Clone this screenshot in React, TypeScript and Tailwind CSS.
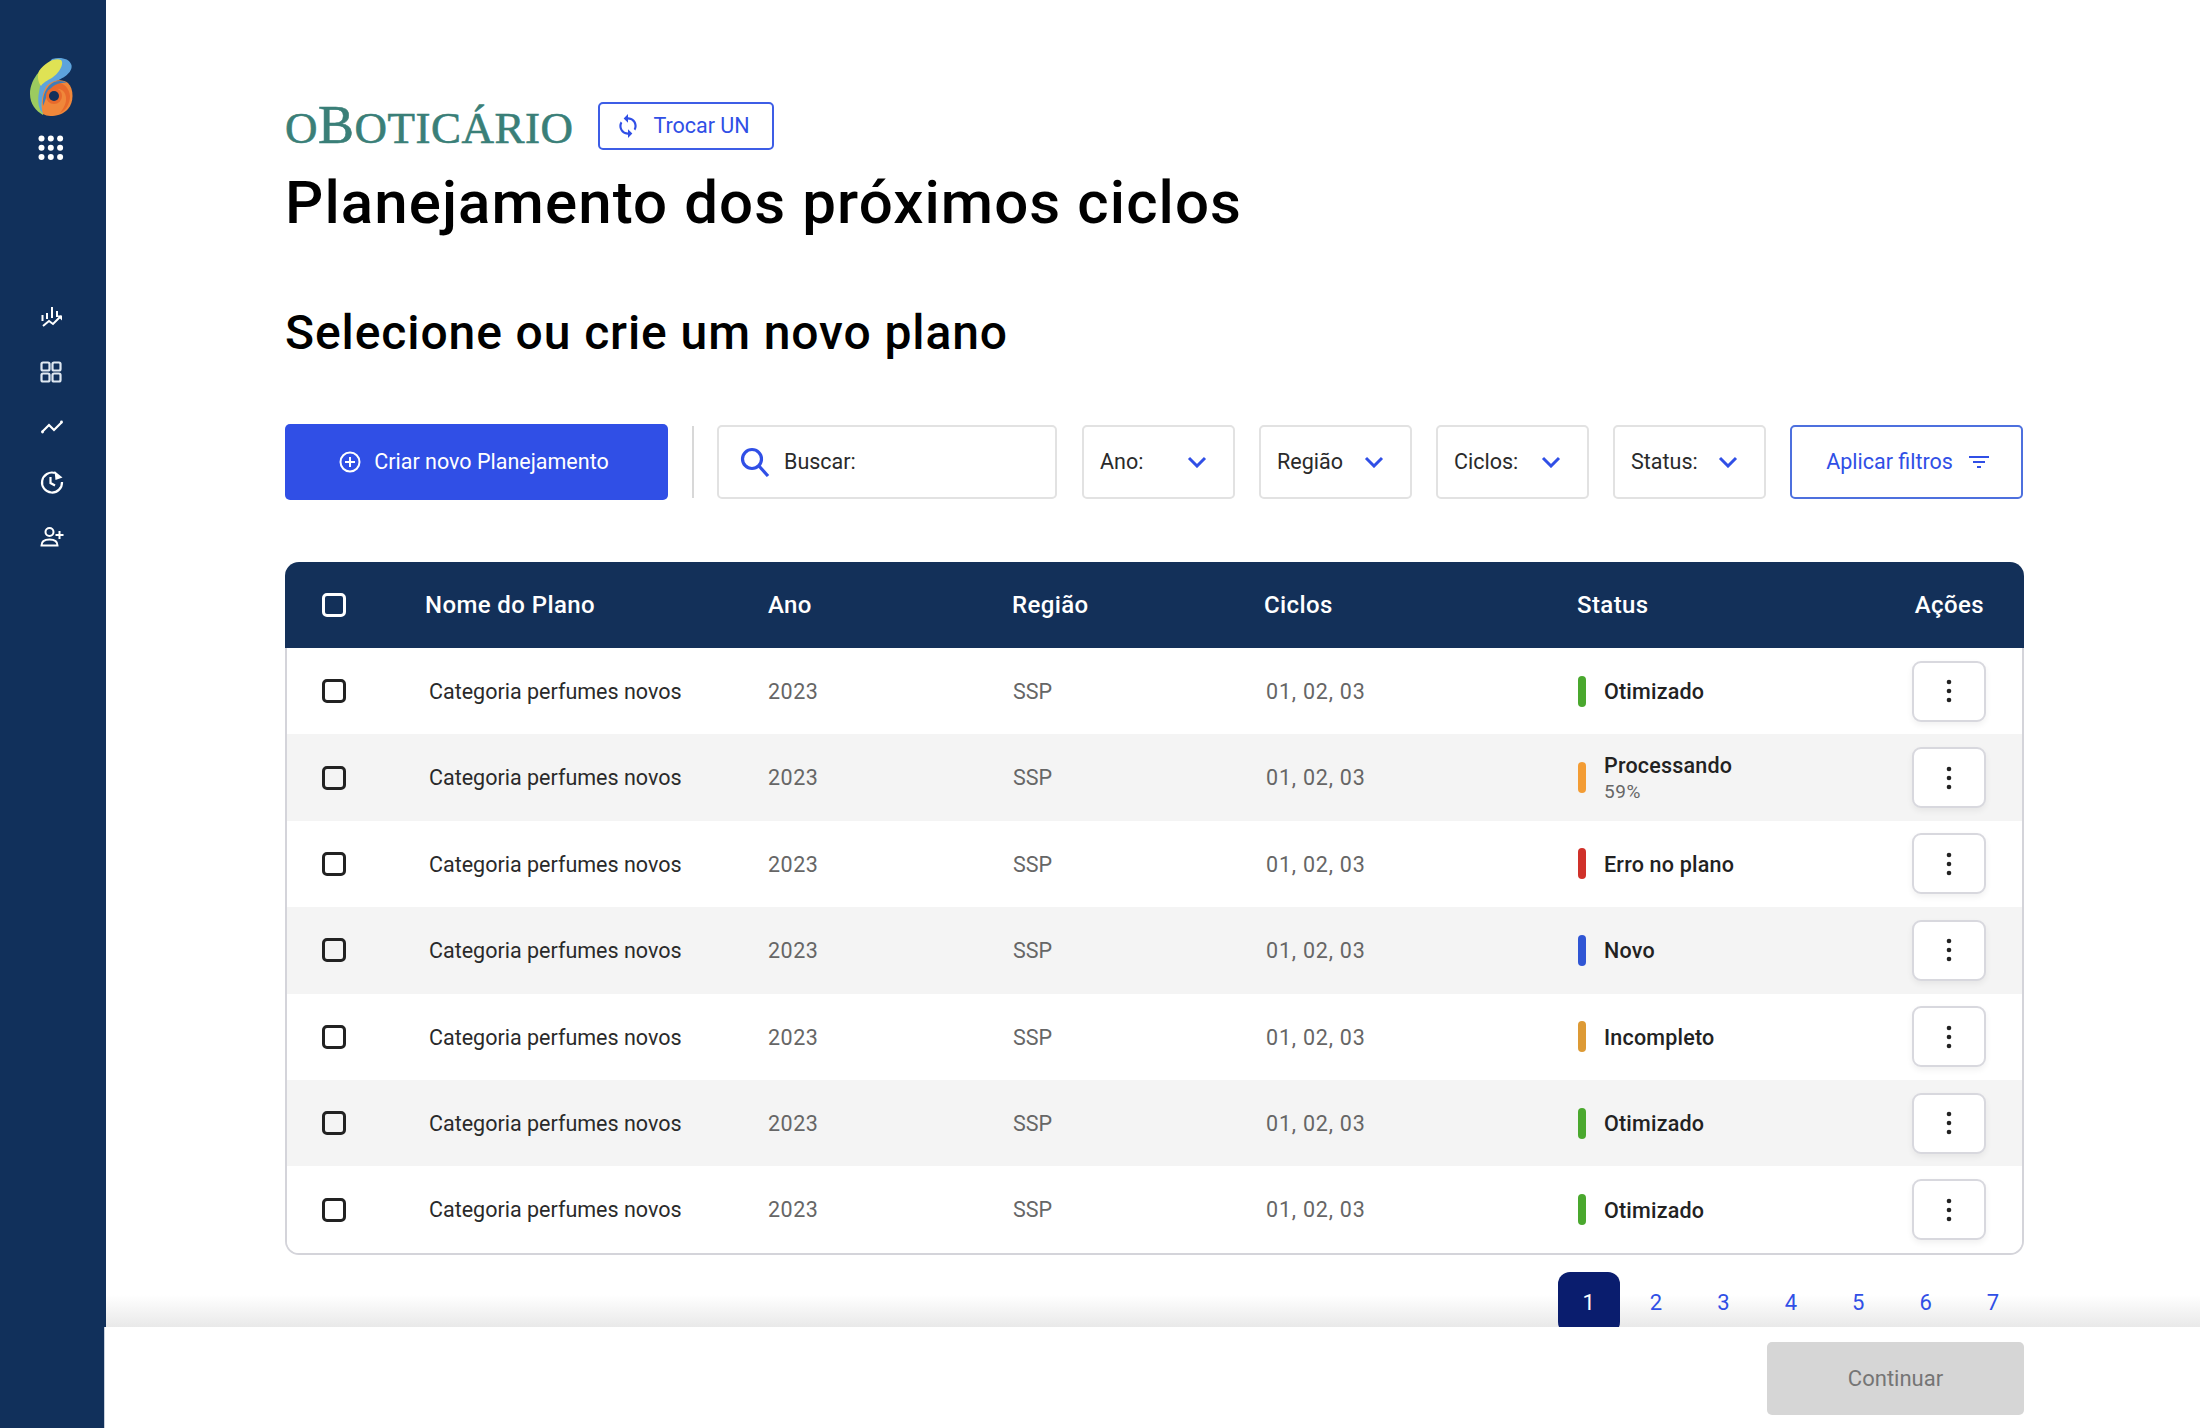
import { MdSync } from 'react-icons/md';

const rows = [
  { status: 'Otimizado', color: 'bg-[#4aa82e]' },
  { status: 'Processando', color: 'bg-[#f39c34]', note: '59%' },
  { status: 'Erro no plano', color: 'bg-[#d0312a]' },
  { status: 'Novo', color: 'bg-[#2f55d4]' },
  { status: 'Incompleto', color: 'bg-[#dd9a35]' },
  { status: 'Otimizado', color: 'bg-[#4aa82e]' },
  { status: 'Otimizado', color: 'bg-[#4aa82e]' },
];

const filters = ['Ano:', 'Região', 'Ciclos:', 'Status:'];
const pages = [1, 2, 3, 4, 5, 6, 7];
const gridCols = 'grid grid-cols-[140px_343px_244px_252px_313px_1fr] items-center';

function Logo() {
  return (
    <svg width="110" height="66" viewBox="0 0 110 66">
      <g transform="translate(0 -20)">
        <path d="M60 28C44 33 30 48 30 64C30 74 36 81 43 85L50 60L62 32Z" fill="#9ccb5f" />
        <path d="M52 29C60 27 69 28 71.5 35C73 43 62 49 54 52C47 55 44 62 42 70C41 76 42 82 44 84C39 81 37 72 39 62C41 50 45 36 52 29Z" fill="#5da3dc" />
        <path d="M39 41C45 32 56 27 61 30C65 34 58 45 50 49C46 51 42 54 41 56C38 52 37 46 39 41Z" fill="#dfe254" />
        <path d="M46 57C51 50 62 48 68 53C74 59 74 72 68 79C62 86 50 88 43 84C41 78 41 66 46 57Z" fill="#f0873a" />
        <path d="M54 53C62 51 69 57 70 66C70 74 66 80 60 83C66 76 68 68 64 62C60 57 52 58 48 63C48 59 50 55 54 53Z" fill="#e86a2c" />
        <path d="M43 76C42 66 46 56 54 52C59 50 64 51 67 53C60 52 52 55 48 62C46 67 45 72 43 76Z" fill="#3f7db8" />
        <circle cx="54" cy="66" r="8" fill="#e86a2c" />
        <circle cx="54" cy="66" r="5" fill="#11305b" />
      </g>
    </svg>
  );
}

function AppsIcon() {
  const dots = [0, 1, 2];
  return (
    <svg width="26" height="26" viewBox="0 0 26 26" fill="#fff">
      {dots.map((y) => dots.map((x) => <circle key={`${x}-${y}`} cx={3.5 + x * 9.3} cy={3.5 + y * 9.3} r="3" />))}
    </svg>
  );
}

function NavIcons() {
  return (
    <div className="flex flex-col items-center gap-[32px] text-white">
      <svg width="24" height="24" viewBox="0 0 24 24" fill="none" stroke="currentColor" strokeWidth="2">
        <path d="M12 2v11M17 6v6M7 8v6M2.500 10v6" />
        <path d="M3 21l6-5 4 3 8-8" />
        <path d="M17 10.500h5v5" fill="currentColor" stroke="none" />
      </svg>
      <svg className="-ml-[2px] -mt-px" width="24" height="24" viewBox="0 0 24 24" fill="none" stroke="#dfe8f2" strokeWidth="2.200">
        <rect x="2.500" y="2.500" width="8" height="8" rx="1.500" />
        <rect x="13.500" y="2.500" width="8" height="8" rx="1.500" />
        <rect x="2.500" y="13.500" width="8" height="8" rx="1.500" />
        <rect x="13.500" y="13.500" width="8" height="8" rx="1.500" />
      </svg>
      <svg width="24" height="22" viewBox="0 0 24 22" fill="none" stroke="currentColor" strokeWidth="2.200">
        <path d="M2 16l7-7 5 5 8-8" />
        <circle cx="2.500" cy="16" r="1.400" fill="currentColor" stroke="none" />
        <circle cx="21.500" cy="6" r="1.400" fill="currentColor" stroke="none" />
      </svg>
      <svg width="24" height="24" viewBox="0 0 24 24" fill="none" stroke="currentColor" strokeWidth="2.200">
        <path d="M15 3a10 10 0 1 0 7 9" />
        <path d="M10.500 7v6l4.500 2.500" />
        <path d="M14.500 1l8 6.500-7 2.500z" fill="currentColor" stroke="none" />
      </svg>
      <svg className="mt-px" width="24" height="20" viewBox="0 0 24 20" fill="none" stroke="currentColor" strokeWidth="2">
        <circle cx="9.500" cy="5" r="4" />
        <path d="M1.500 18.500c0-4 3.500-6 8-6s8 2 8 6z" />
        <path d="M19.500 4v8M15.500 8h8" />
      </svg>
    </div>
  );
}

function Checkbox({ light }: { light?: boolean }) {
  return (
    <div className={`ml-[37px] h-[24px] w-[24px] rounded-[5px] border-[3px] ${light ? 'border-white' : 'border-[#222222]'}`} />
  );
}

function Chevron() {
  return (
    <svg width="20" height="12" viewBox="0 0 20 12" fill="none" stroke="#304fe6" strokeWidth="3">
      <path d="M2 2l8 8 8-8" />
    </svg>
  );
}

function Kebab() {
  return (
    <svg width="6" height="26" viewBox="0 0 6 26" fill="#222222">
      <circle cx="3" cy="4" r="2.300" />
      <circle cx="3" cy="13" r="2.300" />
      <circle cx="3" cy="22" r="2.300" />
    </svg>
  );
}

function Toolbar() {
  return (
    <div className="mt-[60px] flex h-[76px] items-center gap-6">
      <button className="flex h-[76px] w-[383px] items-center justify-center gap-[13px] rounded-[5px] bg-[#304fe6] pr-[5px] text-[21.500px] text-white">
        <svg width="22" height="22" viewBox="0 0 22 22" fill="none" stroke="#fff" strokeWidth="2">
          <circle cx="11" cy="11" r="9.500" />
          <path d="M11 6v10M6 11h10" />
        </svg>
        Criar novo Planejamento
      </button>
      <div className="h-[72px] w-[2px] bg-[#d8d8d8]" />
      <div className="-ml-px flex h-[74px] w-[340px] items-center gap-[14px] rounded-[5px] border-2 border-[#e2e2e2] pl-[21px] text-[21.500px] text-[#2a2a2a]">
        <svg width="30" height="30" viewBox="0 0 30 30" fill="none" stroke="#304fe6" strokeWidth="3.200">
          <circle cx="12" cy="12" r="9.500" />
          <path d="M19 19l9 10" />
        </svg>
        Buscar:
      </div>
      <div className="flex items-center gap-6 pl-px">
        {filters.map((label) => (
          <div key={label} className="flex h-[74px] w-[153px] items-center justify-between rounded-[5px] border-2 border-[#e2e2e2] pl-[16px] pr-[26px] text-[21.500px] text-[#2a2a2a]">
            {label}
            <Chevron />
          </div>
        ))}
      </div>
      <button className="flex h-[74px] w-[233px] items-center justify-center gap-[16px] rounded-[5px] border-2 border-[#4d70de] pl-[2px] text-[21.500px] text-[#304fe6]">
        Aplicar filtros
        <svg width="20" height="14" viewBox="0 0 20 14" fill="none" stroke="#304fe6" strokeWidth="2">
          <path d="M0 2h20M4 7h12M8 12h4" />
        </svg>
      </button>
    </div>
  );
}

function PlansTable() {
  return (
    <div className="mt-[62px] w-[1739px]">
      <div className={`${gridCols} h-[86px] rounded-t-[14px] bg-[#133059] text-[24px] font-medium tracking-[0.4px] text-white`}>
        <Checkbox light />
        <span>Nome do Plano</span>
        <span>Ano</span>
        <span>Região</span>
        <span>Ciclos</span>
        <div className="flex items-center justify-between pr-[40px]">
          <span>Status</span>
          <span>Ações</span>
        </div>
      </div>
      <div className="overflow-hidden rounded-b-[14px] border-x-2 border-b-2 border-[#d4d4da]">
        {rows.map((row, i) => (
          <div key={i} className={`${gridCols} -mx-[2px] h-[86.400px] text-[21.500px] ${i % 2 === 1 ? 'bg-[#f4f4f4]' : 'bg-white'}`}>
            <Checkbox />
            <span className="pl-1 pt-[2px] text-[#2a2a2a]">Categoria perfumes novos</span>
            <span className="pt-[2px] tracking-[0.5px] text-[#666666]">2023</span>
            <span className="pl-px pt-[2px] text-[#666666]">SSP</span>
            <span className="pl-[2px] pt-[2px] tracking-[0.8px] text-[#666666]">01, 02, 03</span>
            <div className="flex items-center justify-between pr-[38px]">
              <div className="flex items-center gap-[18px] pl-px">
                <div className={`h-[31px] w-[8px] rounded-full ${row.color}`} />
                <div className="flex flex-col pt-px text-[#222222]">
                  <span className="font-medium leading-[25px] tracking-[0.2px]">{row.status}</span>
                  {row.note && <span className="pt-[1px] text-[19px] leading-[25px] tracking-[0.6px] text-[#666666]">{row.note}</span>}
                </div>
              </div>
              <button className="flex h-[61px] w-[74px] items-center justify-center rounded-[9px] border-2 border-[#d8d8de] bg-white shadow-[0_3px_6px_rgba(0,0,0,0.06)]">
                <Kebab />
              </button>
            </div>
          </div>
        ))}
      </div>
    </div>
  );
}

export default function App() {
  return (
    <div className="flex h-[1428px] w-[2200px] overflow-hidden bg-white font-['Roboto',sans-serif]">
      <aside className="relative z-0 flex w-[106px] shrink-0 flex-col items-center bg-[#11305b] pr-[3px]">
        <div className="ml-[6px] mt-[50px]">
          <Logo />
        </div>
        <div className="mr-[2px] mt-[19px]">
          <AppsIcon />
        </div>
        <div className="mt-[144px]">
          <NavIcons />
        </div>
      </aside>

      <div className="flex min-w-0 flex-1 flex-col">
        <main className="relative min-h-0 flex-1 overflow-hidden pl-[179px] pt-[102px]">
          <div className="flex h-[48px] items-center gap-[24px]">
            <div className="-mt-[2px] flex items-baseline font-['Liberation_Serif',serif] text-[45px] leading-none tracking-[0.5px] text-[#3a7f78] [-webkit-text-stroke:0.6px_#3a7f78]">
              <span>O</span>
              <span className="text-[54px]">B</span>
              <span>OTICÁRIO</span>
            </div>
            <button className="flex h-[48px] w-[176px] items-center justify-center gap-[12px] rounded-[5px] border-2 border-[#3d5de6] pr-[6px] text-[21.500px] text-[#304fe6]">
              <MdSync size={26} />
              Trocar UN
            </button>
          </div>
          <h1 className="mt-[15px] text-[60px] font-medium leading-[76px] tracking-[1.1px] text-black">Planejamento dos próximos ciclos</h1>
          <h2 className="mt-[61px] text-[48px] font-medium leading-[62px] tracking-[0.9px] text-black">Selecione ou crie um novo plano</h2>
          <Toolbar />
          <PlansTable />
          <div className="relative z-10 mr-[176px] mt-[17px] flex justify-end gap-[5.400px]">
            {pages.map((p) => (
              <div key={p} className={`flex h-[62px] w-[62px] items-center justify-center rounded-[12px] text-[22px] ${p === 1 ? 'bg-[#0a1d6e] text-white' : 'text-[#304fe6]'}`}>
                {p}
              </div>
            ))}
          </div>
          <div className="absolute inset-x-0 bottom-0 h-[32px] bg-linear-to-b from-transparent to-[#e9e9e9]" />
        </main>
        <footer className="relative z-10 -ml-[2px] flex h-[101px] shrink-0 items-start justify-end border-l border-[#c8d0dc] bg-white pr-[176px] pt-[15px]">
          <button className="h-[73px] w-[257px] rounded-[5px] bg-[#d6d6d6] text-[22px] text-[#757575]">Continuar</button>
        </footer>
      </div>
    </div>
  );
}
